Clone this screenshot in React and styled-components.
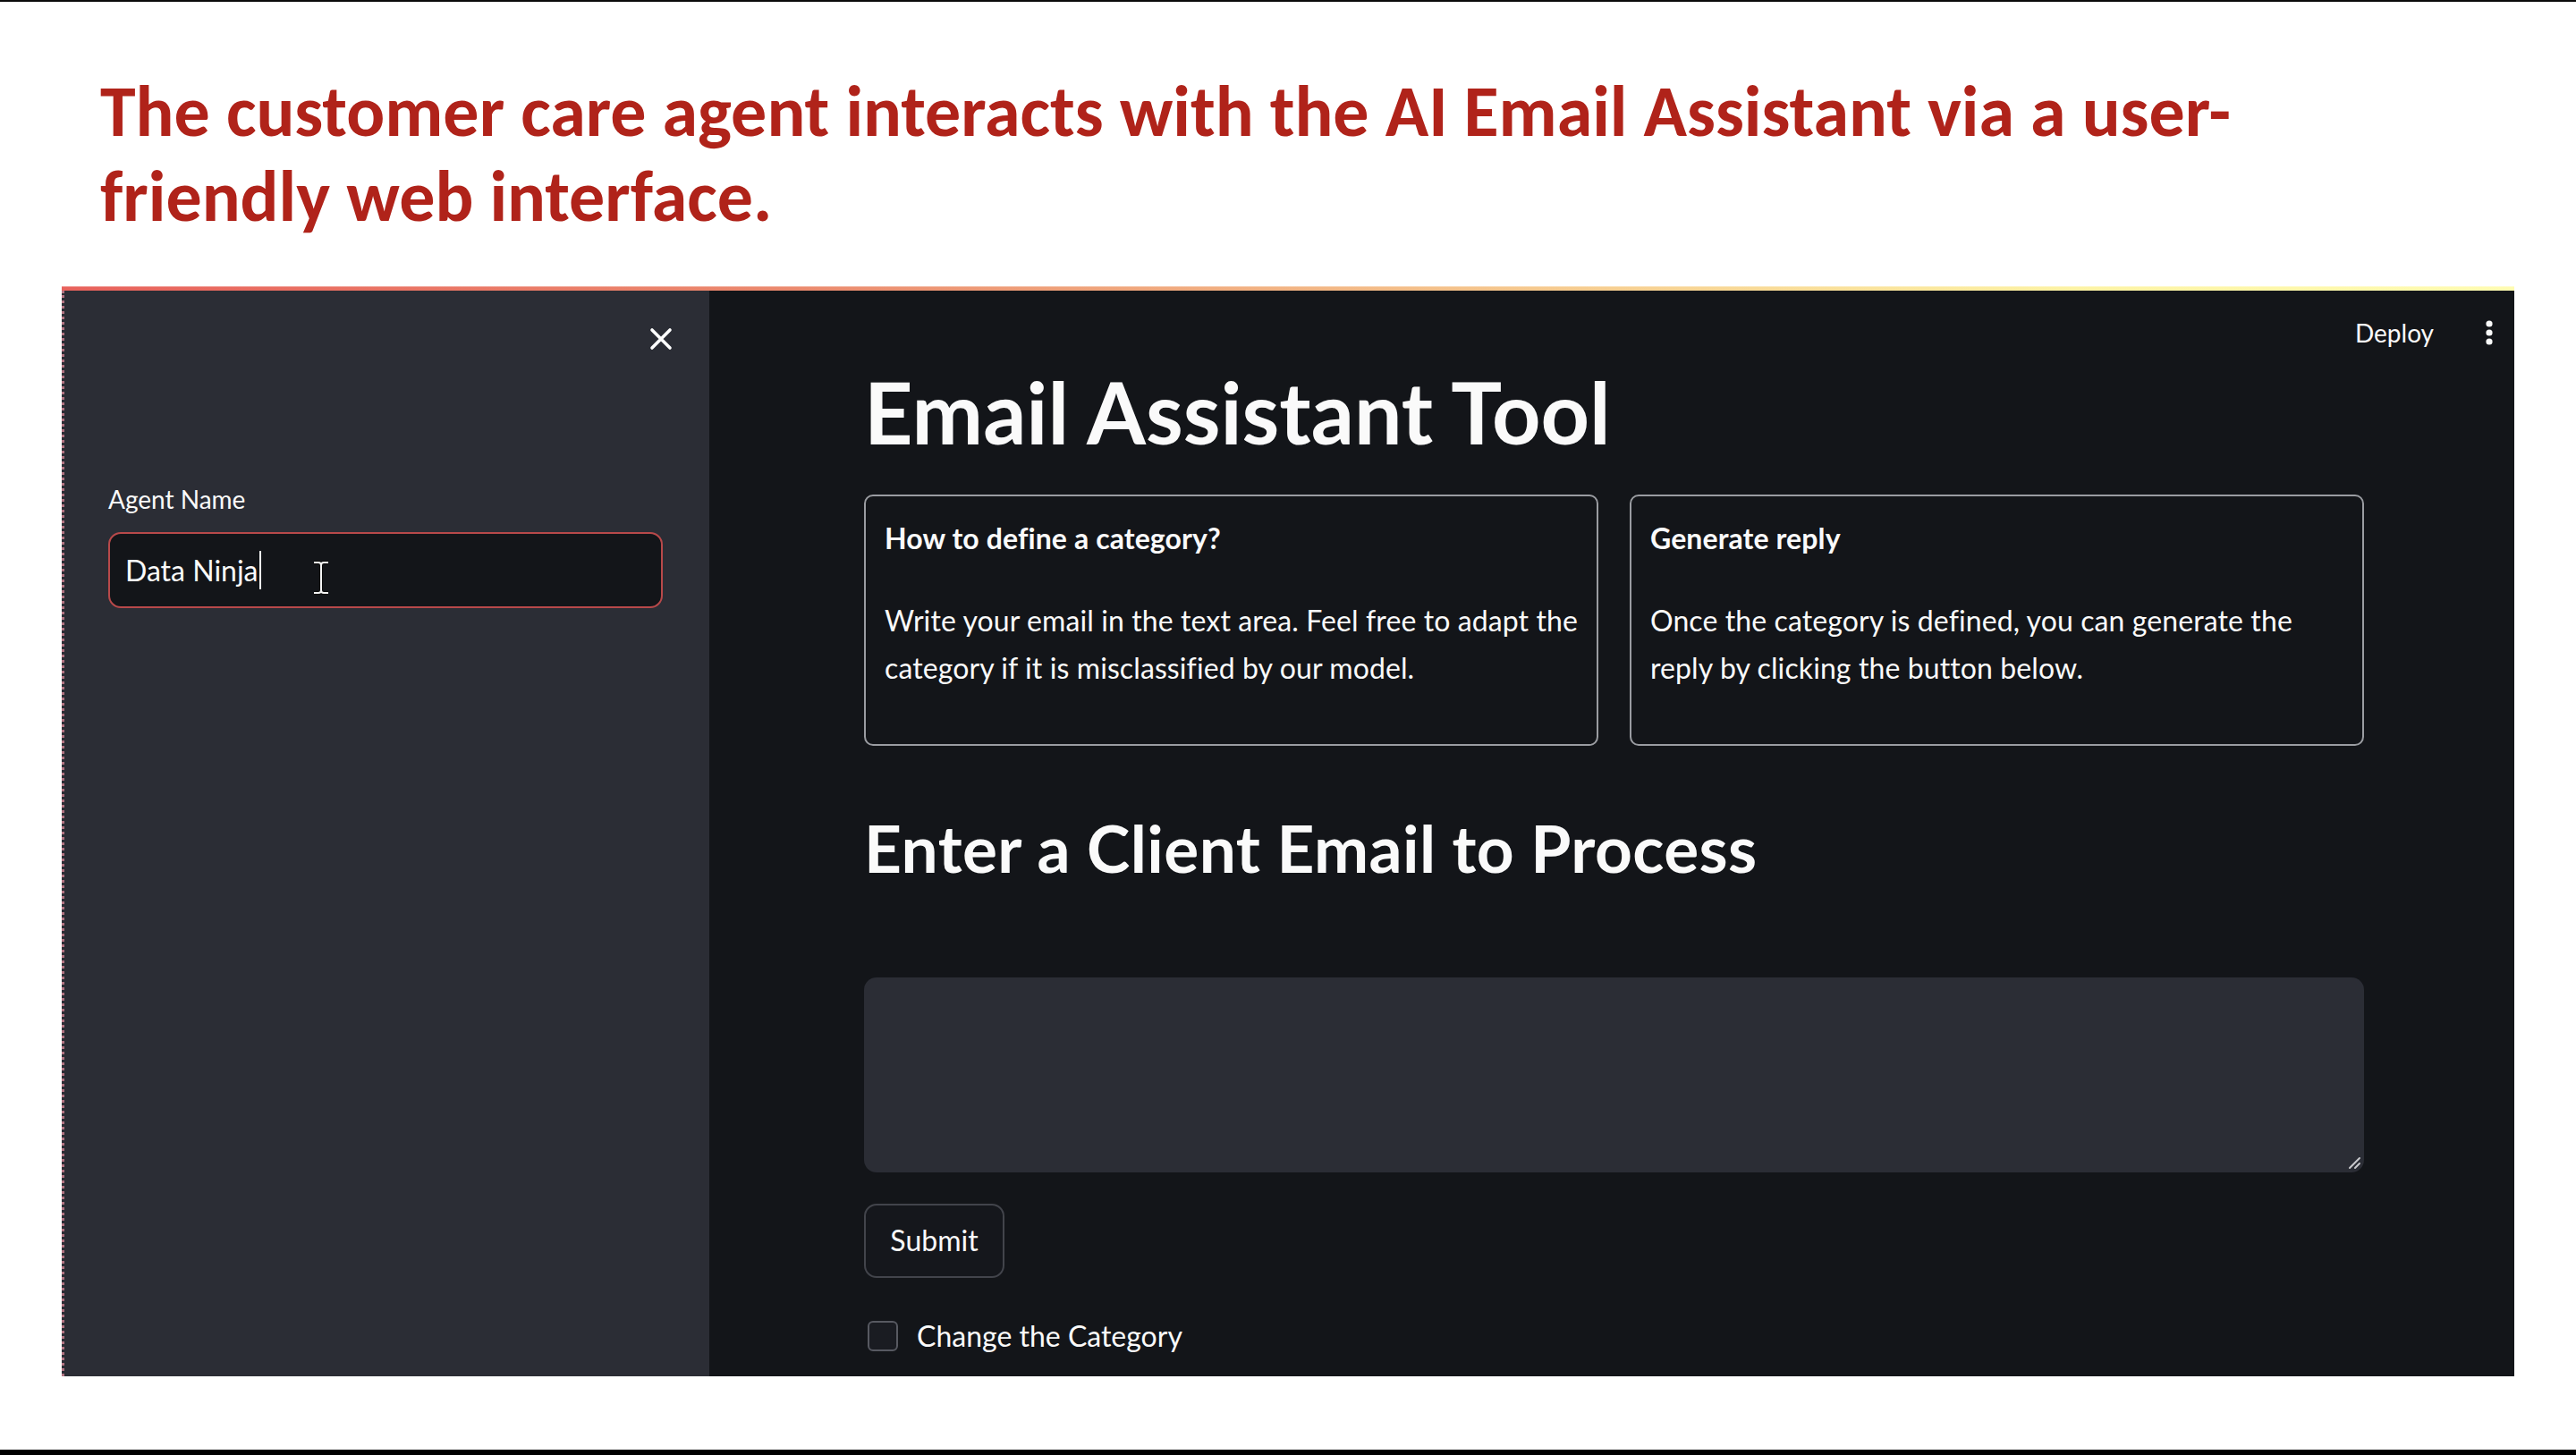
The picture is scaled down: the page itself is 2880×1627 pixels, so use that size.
import React from "react";
import styled, { createGlobalStyle } from "styled-components";

const UI_FONT = `"Source Sans Pro", Lato, "Liberation Sans", sans-serif`;
const SLIDE_FONT = `Calibri, Carlito, Lato, "Liberation Sans", sans-serif`;

const GlobalStyle = createGlobalStyle`
  html, body {
    margin: 0;
    padding: 0;
    background: #ffffff;
  }
  body {
    width: 2880px;
    height: 1627px;
    overflow: hidden;
  }
  * {
    box-sizing: border-box;
  }
`;

const Slide = styled.div`
  display: flex;
  flex-direction: column;
  width: 2880px;
  height: 1627px;
  background: #ffffff;
`;

const TopRule = styled.div`
  height: 2px;
  background: #0a0a0a;
`;

const Caption = styled.h1`
  margin: 75px 0 0 0;
  padding-left: 112px;
  font-family: ${SLIDE_FONT};
  font-weight: 700;
  font-size: 80px;
  line-height: 95px;
  color: #b0231a;
`;

const Window = styled.div`
  margin: 53px 0 0 69px;
  width: 2742px;
  height: 1219px;
  display: flex;
  flex-direction: column;
  overflow: hidden;
  background: #131519;
  font-family: ${UI_FONT};
  color: #fafafa;
`;

const Decoration = styled.div`
  height: 5px;
  flex: none;
  background: linear-gradient(90deg, #e8625c 0%, #eb8a6e 30%, #f6c98e 60%, #fdf3a4 82%, #fffcb2 100%);
  box-shadow: inset 0 1px 0 rgba(255, 255, 255, 0.35);
`;

const AppBody = styled.div`
  flex: 1;
  display: flex;
  min-height: 0;
`;

const Sidebar = styled.aside`
  width: 724px;
  flex: none;
  background: #2b2d35;
  border-left: 3px dotted #b27482;
  padding: 40px 52px 0 49px;
  display: flex;
  flex-direction: column;
`;

const CloseRow = styled.div`
  display: flex;
  justify-content: flex-end;
  margin-right: -11px;
`;

const CloseButton = styled.button`
  width: 26px;
  height: 28px;
  padding: 0;
  border: none;
  background: none;
  color: #ffffff;
  display: flex;
  align-items: center;
  justify-content: center;
`;

const FieldLabel = styled.label`
  margin-top: 145px;
  font-size: 28px;
  line-height: 40px;
  color: #fafafa;
`;

const NameInput = styled.div`
  position: relative;
  margin-top: 17px;
  height: 85px;
  border: 2px solid #b8494a;
  border-radius: 14px;
  background: #131519;
  padding: 0 17px;
  display: flex;
  align-items: center;
  font-size: 32px;
  line-height: 40px;
  color: #fafafa;
`;

const Caret = styled.span`
  display: inline-block;
  width: 2px;
  height: 43px;
  margin-left: 1px;
  background: #fafafa;
`;

const Pointer = styled.svg`
  position: absolute;
  left: 225px;
  top: 30px;
`;

const Main = styled.main`
  flex: 1;
  display: flex;
  flex-direction: column;
  padding-left: 5px;
`;

const Toolbar = styled.div`
  height: 72px;
  flex: none;
  padding: 27px 24px 0 0;
  display: flex;
  justify-content: flex-end;
  align-items: flex-start;
  gap: 58px;
`;

const DeployButton = styled.button`
  padding: 0;
  border: none;
  background: none;
  font-family: ${UI_FONT};
  font-size: 28px;
  line-height: 40px;
  color: #fafafa;
`;

const MenuButton = styled.button`
  padding: 0;
  border: none;
  background: none;
  height: 40px;
  display: flex;
  align-items: center;
  color: #fafafa;
`;

const Content = styled.div`
  width: 1677px;
  margin: 0 auto;
  display: flex;
  flex-direction: column;
  align-items: flex-start;
`;

const Title = styled.h1`
  margin: 6px 0 0 0;
  font-size: 95px;
  font-weight: 700;
  line-height: 1.2;
  color: #fafafa;
`;

const CardGrid = styled.div`
  margin-top: 36px;
  width: 100%;
  display: grid;
  grid-template-columns: 1fr 1fr;
  gap: 35px;
`;

const InfoCard = styled.section`
  height: 281px;
  border: 2px solid #9a9ca1;
  border-radius: 10px;
  padding: 21px 20px 0 21px;
`;

const CardTitle = styled.h3`
  margin: 0;
  font-size: 32px;
  font-weight: 700;
  line-height: 51px;
  letter-spacing: 0.1px;
`;

const CardText = styled.p`
  margin: 40px 0 0 0;
  font-size: 32px;
  line-height: 53px;
  letter-spacing: 0.1px;
`;

const SectionTitle = styled.h2`
  margin: 71px 0 0 0;
  font-size: 73px;
  font-weight: 700;
  line-height: 1.2;
  letter-spacing: 0.4px;
`;

const EmailField = styled.div`
  position: relative;
  margin-top: 100px;
  width: 100%;
  height: 218px;
`;

const EmailArea = styled.textarea`
  display: block;
  width: 100%;
  height: 100%;
  border: none;
  border-radius: 14px;
  background: #2b2d35;
  color: #fafafa;
  resize: none;
  padding: 20px 24px;
  font-family: ${UI_FONT};
  font-size: 32px;
  outline: none;
`;

const ResizeHandle = styled.svg`
  position: absolute;
  right: 3px;
  bottom: 3px;
  pointer-events: none;
`;

const SubmitButton = styled.button`
  margin-top: 35px;
  width: 157px;
  height: 83px;
  border: 2px solid #42444b;
  border-radius: 14px;
  background: #15171c;
  color: #fafafa;
  font-family: ${UI_FONT};
  font-size: 32px;
  line-height: 40px;
  display: flex;
  align-items: center;
  justify-content: center;
`;

const CheckRow = styled.label`
  margin-top: 45px;
  margin-left: 4px;
  display: flex;
  align-items: center;
  gap: 21px;
  font-size: 32px;
  line-height: 40px;
`;

const CheckBox = styled.span`
  width: 34px;
  height: 34px;
  border: 2px solid #575961;
  border-radius: 6px;
  background: #1a1c22;
`;

const BottomBar = styled.div`
  margin-top: auto;
  height: 6px;
  background: #000000;
`;

const XIcon = () => (
  <svg width="26" height="26" viewBox="0 0 26 26" fill="none">
    <path d="M3 3 L23 23 M23 3 L3 23" stroke="currentColor" strokeWidth="3.6" strokeLinecap="round" />
  </svg>
);

const DotsIcon = () => (
  <svg width="8" height="28" viewBox="0 0 8 28" fill="currentColor">
    <circle cx="4" cy="4" r="3.6" />
    <circle cx="4" cy="14" r="3.6" />
    <circle cx="4" cy="24" r="3.6" />
  </svg>
);

const cards = [
  {
    title: "How to define a category?",
    text: "Write your email in the text area. Feel free to adapt the category if it is misclassified by our model.",
  },
  {
    title: "Generate reply",
    text: "Once the category is defined, you can generate the reply by clicking the button below.",
  },
];

const App = () => {
  return (
    <Slide>
      <GlobalStyle />
      <TopRule />
      <Caption>
        The customer care agent interacts with the AI Email Assistant via a user-
        <br />
        friendly web interface.
      </Caption>
      <Window>
        <Decoration />
        <AppBody>
          <Sidebar>
            <CloseRow>
              <CloseButton>
                <XIcon />
              </CloseButton>
            </CloseRow>
            <FieldLabel>Agent Name</FieldLabel>
            <NameInput>
              Data Ninja
              <Caret />
              <Pointer width="22" height="38" viewBox="0 0 22 38">
                <path
                  d="M3 2 H8 Q11 2 11 5 Q11 2 14 2 H19 M11 5 V33 M3 36 H8 Q11 36 11 33 Q11 36 14 36 H19"
                  stroke="#0a0a0a"
                  strokeWidth="4"
                  fill="none"
                />
                <path
                  d="M3 2 H8 Q11 2 11 5 Q11 2 14 2 H19 M11 5 V33 M3 36 H8 Q11 36 11 33 Q11 36 14 36 H19"
                  stroke="#f4f4f4"
                  strokeWidth="2"
                  fill="none"
                />
              </Pointer>
            </NameInput>
          </Sidebar>
          <Main>
            <Toolbar>
              <DeployButton>Deploy</DeployButton>
              <MenuButton>
                <DotsIcon />
              </MenuButton>
            </Toolbar>
            <Content>
              <Title>Email Assistant Tool</Title>
              <CardGrid>
                {cards.map((card) => (
                  <InfoCard key={card.title}>
                    <CardTitle>{card.title}</CardTitle>
                    <CardText>{card.text}</CardText>
                  </InfoCard>
                ))}
              </CardGrid>
              <SectionTitle>Enter a Client Email to Process</SectionTitle>
              <EmailField>
                <EmailArea />
                <ResizeHandle width="16" height="16" viewBox="0 0 16 16">
                  <path d="M14 3 L3 14 M14 9 L9 14" stroke="#c8c8cc" strokeWidth="2" strokeLinecap="round" />
                </ResizeHandle>
              </EmailField>
              <SubmitButton>Submit</SubmitButton>
              <CheckRow>
                <CheckBox />
                Change the Category
              </CheckRow>
            </Content>
          </Main>
        </AppBody>
      </Window>
      <BottomBar />
    </Slide>
  );
};

export default App;
